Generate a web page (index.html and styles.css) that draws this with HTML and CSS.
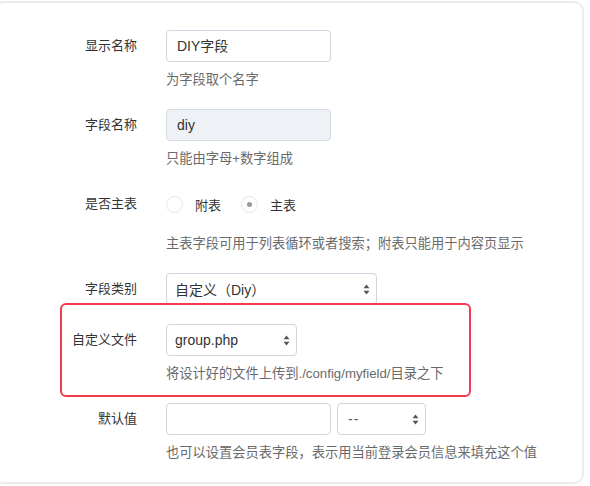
FILE: index.html
```html
<!DOCTYPE html>
<html lang="zh">
<head>
<meta charset="utf-8">
<link rel="stylesheet" href="styles.css">
</head>
<body>
<div class="card">
  <div class="form">
    <div class="row">
      <div class="label">显示名称</div>
      <div class="control"><div class="input">DIY字段</div></div>
      <div class="help">为字段取个名字</div>
    </div>
    <div class="row">
      <div class="label">字段名称</div>
      <div class="control"><div class="input disabled">diy</div></div>
      <div class="help">只能由字母+数字组成</div>
    </div>
    <div class="row">
      <div class="label">是否主表</div>
      <div class="control radios">
        <span class="radio"></span><span class="radio-text">附表</span>
        <span class="radio checked"></span><span class="radio-text">主表</span>
      </div>
      <div class="help help-radio">主表字段可用于列表循环或者搜索；附表只能用于内容页显示</div>
    </div>
    <div class="row row-type">
      <div class="label">字段类别</div>
      <div class="control"><div class="select select-wide disabled"><span>自定义（Diy）</span><svg class="arrows" width="7" height="11" viewBox="0 0 7 11"><path d="M3.5 0.5 L6.5 4.2 L0.5 4.2 Z M3.5 10.5 L6.5 6.8 L0.5 6.8 Z" fill="#555"/></svg></div></div>
    </div>
    <div class="highlight">
      <div class="row row-inner">
        <div class="label">自定义文件</div>
        <div class="control"><div class="select select-file"><span>group.php</span><svg class="arrows" width="7" height="11" viewBox="0 0 7 11"><path d="M3.5 0.5 L6.5 4.2 L0.5 4.2 Z M3.5 10.5 L6.5 6.8 L0.5 6.8 Z" fill="#555"/></svg></div></div>
        <div class="help">将设计好的文件上传到./config/myfield/目录之下</div>
      </div>
    </div>
    <div class="row row-last">
      <div class="label">默认值</div>
      <div class="control pair"><div class="input"></div><div class="select select-small"><span class="dash">--</span><svg class="arrows" width="7" height="11" viewBox="0 0 7 11"><path d="M3.5 0.5 L6.5 4.2 L0.5 4.2 Z M3.5 10.5 L6.5 6.8 L0.5 6.8 Z" fill="#555"/></svg></div></div>
      <div class="help">也可以设置会员表字段，表示用当前登录会员信息来填充这个值</div>
    </div>
  </div>
</div>
</body>
</html>
```

FILE: styles.css
```css
* { box-sizing: border-box; }

html, body {
  margin: 0;
  padding: 0;
  background: #ffffff;
  overflow: hidden;
}

body {
  font-family: "Liberation Sans", "Noto Sans CJK SC", sans-serif;
  color: #333333;
  font-size: 13px;
}

.card {
  margin: 1px 0 0 -6px;
  width: 590px;
  height: 483px;
  border: 2px solid #ececec;
  border-radius: 10px;
  background: #ffffff;
  padding: 27px 0 0 44px;
}

.form {
  display: flex;
  flex-direction: column;
}

.row {
  display: grid;
  grid-template-columns: 97px auto;
  column-gap: 29px;
  margin-bottom: 20px;
}

.label {
  grid-column: 1;
  text-align: right;
  line-height: 32px;
  height: 32px;
  font-size: 13px;
  color: #333333;
}

.control {
  grid-column: 2;
  height: 32px;
  display: flex;
  align-items: center;
}

.help {
  grid-column: 2;
  margin-top: 9px;
  line-height: 18px;
  height: 18px;
  font-size: 13.25px;
  color: #6a6a6a;
  white-space: nowrap;
}

.help-radio { margin-top: 15px; }

.input {
  width: 165px;
  height: 32px;
  border: 1px solid #cfd6e1;
  border-radius: 4px;
  padding: 0 10px;
  line-height: 30px;
  font-size: 14px;
  color: #333333;
  background: #ffffff;
}

.disabled {
  background: #eef1f6;
  border-color: #d5dbe4;
}

.radio {
  width: 17px;
  height: 17px;
  border: 1px solid #e6e6e6;
  border-radius: 50%;
  display: flex;
  align-items: center;
  justify-content: center;
  background: #ffffff;
}

.radio.checked::after {
  content: "";
  width: 5px;
  height: 5px;
  border-radius: 50%;
  background: #9a9a9a;
}

.radio-text {
  margin-left: 12px;
  margin-right: 20px;
  font-size: 13px;
  color: #333333;
}

.select {
  height: 32px;
  border: 1px solid #cfd6e1;
  border-radius: 4px;
  display: flex;
  align-items: center;
  justify-content: space-between;
  padding: 0 6px 0 8px;
  font-size: 14px;
  color: #333333;
  background: #ffffff;
}

.select-wide { width: 211px; }
.select-file { width: 131px; }
.select-small { width: 89px; margin-left: 6px; padding-left: 10px; }

.dash { color: #555555; letter-spacing: 1px; }

.arrows { flex: none; }

.row-type { margin-bottom: 0; }

.highlight {
  margin: -2px 0 0 20px;
  width: 411px;
  border: 2px solid #f33b4d;
  border-radius: 6px;
  padding: 19px 0 12px 0;
  position: relative;
}

.row-inner {
  margin: 0 0 0 -22px;
}

.row-last { margin-top: 6px; }
```
